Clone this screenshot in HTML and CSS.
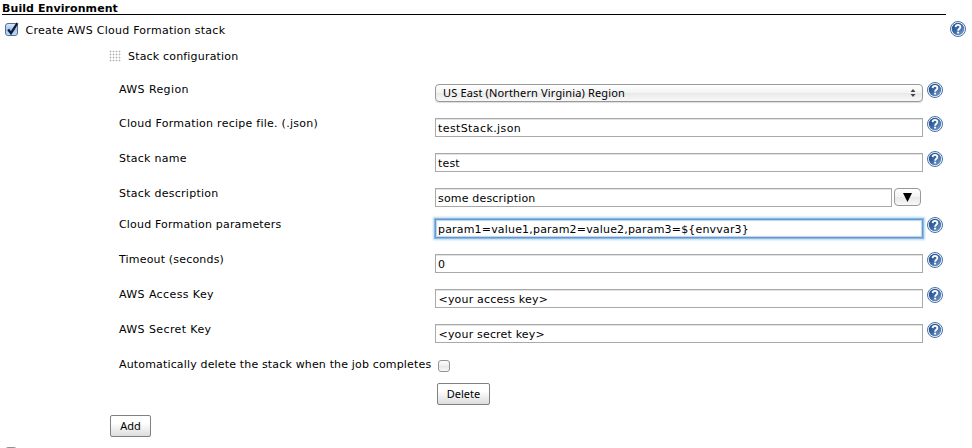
FILE: index.html
```html
<!DOCTYPE html>
<html lang="en">
<head>
<meta charset="utf-8">
<title>Build Environment</title>
<link rel="stylesheet" href="styles.css">
</head>
<body>
<svg class="defs" width="0" height="0" aria-hidden="true">
  <linearGradient id="blue" x1="0" y1="0" x2="1" y2="1"><stop offset="0" stop-color="#204a87"/><stop offset=".45" stop-color="#3865a3"/><stop offset="1" stop-color="#7ba0cd"/></linearGradient>
  <symbol id="help" viewBox="0 0 16 16">
    <circle cx="8" cy="8" r="7.5" fill="#fff" stroke="#4671aa"/>
    <circle cx="8" cy="8" r="6.2" fill="url(#blue)"/>
    <path d="M5.6 6.1C5.7 3.2 10.5 3.2 10.4 6.1C10.4 7.7 8.1 7.8 8.1 9.7" fill="none" stroke="#fff" stroke-width="1.8"/>
    <rect x="7.1" y="10.7" width="2" height="1.8" fill="#fff"/>
  </symbol>
</svg>
<main class="page">
  <h1 class="heading">Build Environment</h1>
  <div class="option">
    <span class="check checked"><svg width="15" height="16" viewBox="0 0 15 16"><path d="M3.2 7.5L6 11.2L12.4 1.2" fill="none" stroke="#101c38" stroke-width="2.3"/></svg></span>
    <span class="option-label">Create AWS Cloud Formation stack</span>
    <svg class="help"><use href="#help"/></svg>
  </div>
  <div class="stack-title"><span class="grip"></span><span>Stack configuration</span></div>
  <div class="form">
    <div class="row first"><span class="label wide">AWS Region</span><div class="select"><span>US East (Northern Virginia) Region</span><svg width="6" height="8" viewBox="0 0 6 8"><path d="M3 0L5.5 3H.5zM3 8L5.5 5H.5z" fill="#444"/></svg></div><svg class="help"><use href="#help"/></svg></div>
    <div class="row"><span class="label medium">Cloud Formation recipe file. (.json)</span><div class="input wide">testStack.json</div><svg class="help"><use href="#help"/></svg></div>
    <div class="row"><span class="label medium">Stack name</span><div class="input">test</div><svg class="help"><use href="#help"/></svg></div>
    <div class="row short"><span class="label medium">Stack description</span><div class="combo"><div class="input">some description</div><div class="expand"><svg width="9" height="9" viewBox="0 0 9 9"><path d="M0 0H9L4.5 9z"/></svg></div></div></div>
    <div class="row"><span class="label">Cloud Formation parameters</span><div class="input focused">param1=value1,param2=value2,param3=${envvar3}</div><svg class="help"><use href="#help"/></svg></div>
    <div class="row"><span class="label">Timeout (seconds)</span><div class="input">0</div><svg class="help"><use href="#help"/></svg></div>
    <div class="row"><span class="label wide">AWS Access Key</span><div class="input key">&lt;your access key&gt;</div><svg class="help"><use href="#help"/></svg></div>
    <div class="row"><span class="label wide">AWS Secret Key</span><div class="input key">&lt;your secret key&gt;</div><svg class="help"><use href="#help"/></svg></div>
    <div class="row last"><span class="label auto">Automatically delete the stack when the job completes</span><span class="check"></span></div>
  </div>
  <div class="button delete">Delete</div>
  <div class="button add">Add</div>
  <span class="check next"></span>
</main>
</body>
</html>
```
FILE: styles.css
```css
* { box-sizing: border-box; }
body { margin: 0; background: #fff; color: #000; font: 11px/14px "DejaVu Sans", Verdana, sans-serif; letter-spacing: .18px; }
.defs { position: absolute; }
.page { width: 972px; height: 448px; overflow: hidden; white-space: nowrap; display: flex; flex-direction: column; align-items: flex-start; }
.page > * { flex-shrink: 0; }
.heading { margin: 0 0 0 2px; width: 944px; height: 15px; padding-top: 2px; border-bottom: 1px solid #000; font-size: 11px; line-height: 14px; font-weight: bold; letter-spacing: .08px; }
.option { display: flex; width: 972px; height: 33px; padding: 7px 6px 0 5px; }
.option .help { margin: -1px 0 0 auto; }
.option-label { margin: 2px 0 0 7.5px; letter-spacing: .26px; }
.help { display: block; width: 16px; height: 16px; flex: none; margin-left: 4px; }
.check { display: block; flex: none; width: 12px; height: 12px; border: 1px solid #929292; border-radius: 3px; background: linear-gradient(#fff, #eee 50%, #e5e5e5 51%, #fafafa); }
.check.checked { width: 13px; height: 13px; margin-top: 1px; border-color: #5a6d93; background: linear-gradient(#d9eafa, #9bc5ee 50%, #b9e1fb); }
.checked svg { display: block; margin: -2px 0 0 -1px; overflow: visible; }
.stack-title { display: flex; height: 34px; padding: 2px 0 0 109px; }
.grip { width: 12px; height: 12px; margin: 0 7px 0 0; background: radial-gradient(circle at 1.5px 1.5px, #b0b0b0 0 .8px, transparent 1.1px) 0 0 / 3px 3px; }
.form { padding-left: 119px; }
.row { display: flex; height: 35px; }
.row.first { height: 34px; }
.row.short { height: 31px; }
.row.last { height: 26px; }
.label { width: 316px; padding-top: 1px; }
.medium { letter-spacing: .26px; }
.wide { letter-spacing: .4px; }
.select, .input { width: 488px; margin-top: 2px; height: 19px; }
.select { display: flex; align-items: center; justify-content: space-between; height: 18px; padding: 0 6px 0 7px; border: 1px solid #999; border-radius: 4px; background: linear-gradient(#fff, #f3f3f3 50%, #e9e9e9 51%, #f8f8f8); box-shadow: 0 1px 1px #ddd; font: 11px/16px "Noto Sans", sans-serif; letter-spacing: .15px; }
.input { padding: 2px 0 0 2px; border: 1px solid #a9a9a9; box-shadow: inset 0 1px #e3e3e3; line-height: 15px; }
.input.key { padding-left: 2.5px; }
.input.focused { border-color: #6598cd; box-shadow: 0 0 0 1px #8cb8e2, 0 0 2px 2px #bcd8f1, inset 0 0 1px 1px #b9d5ef; }
.combo { display: flex; }
.combo .input { width: 457px; }
.expand { display: flex; align-items: center; justify-content: center; width: 27px; height: 18px; margin: 2px 0 0 2px; border: 1px solid #999; border-radius: 4px; background: linear-gradient(#fff, #f3f3f3 50%, #e8e8e8 51%, #f8f8f8); }
.label.auto { width: 319px; letter-spacing: .16px; }
.last .check { margin-top: 3px; }
.button { width: 53px; height: 22px; border: 1px solid #808080; border-radius: 2px; background: linear-gradient(#fff 35%, #dcdcdc); font: 11px/20px "Noto Sans", sans-serif; letter-spacing: 0; text-align: center; }
.delete { margin-left: 437px; }
.add { width: 41px; margin: 10px 0 0 110px; }
.next { margin: 10px 0 0 5px; }
```
